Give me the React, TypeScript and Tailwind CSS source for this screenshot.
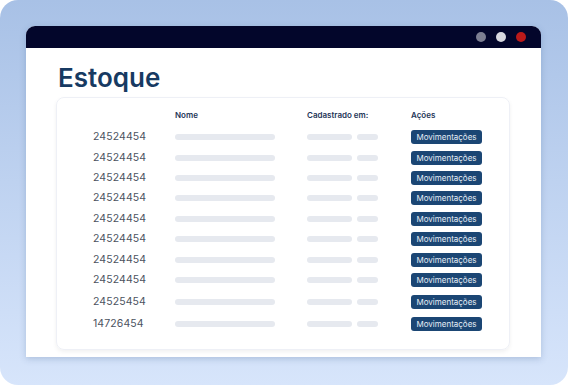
const rows = [
  { code: "24524454", h: "h-[20.4px]" },
  { code: "24524454", h: "h-[20.4px]" },
  { code: "24524454", h: "h-[20.4px]" },
  { code: "24524454", h: "h-[20.4px]" },
  { code: "24524454", h: "h-[20.4px]" },
  { code: "24524454", h: "h-[20.4px]" },
  { code: "24524454", h: "h-[20.4px]" },
  { code: "24524454", h: "h-[21px]" },
  { code: "24525454", h: "h-[22px]" },
  { code: "14726454", h: "h-[23px]" },
];

export default function App() {
  return (
    <div className="w-[568px] h-[385px] bg-white font-['Inter',sans-serif]">
      <div className="h-full rounded-[18px] bg-gradient-to-b from-[#a8c1e6] to-[#d7e5fb] pt-[26px] pl-[26px] pr-[27px]">
        <div className="h-[331px] bg-white rounded-t-[9px] shadow-[0_2px_6px_rgba(60,90,140,0.25)] overflow-hidden">
          <div className="h-[22px] bg-[#03062b] flex items-center justify-end gap-[10px] pr-[15px]">
            <span className="w-[10px] h-[10px] rounded-full bg-[#7d7f92]" />
            <span className="w-[10px] h-[10px] rounded-full bg-[#d8d9e0]" />
            <span className="w-[10px] h-[10px] rounded-full bg-[#bb1a1a]" />
          </div>
          <div className="px-[30px] pr-[31px]">
            <h1 className="text-[26px] leading-[26px] font-semibold text-[#173a62] pt-[17px] pb-[6px] pl-[2px]">
              Estoque
            </h1>
            <div className="h-[253px] rounded-[8px] border border-[#eef0f6] shadow-[0_2px_4px_rgba(0,0,0,0.06)] pt-[10px] pl-[36px]">
              <div className="grid grid-cols-[82px_132px_104px_1fr] h-[14px] items-center text-[8px] font-semibold text-[#1d3557]">
                <span />
                <span>Nome</span>
                <span>Cadastrado em:</span>
                <span>Ações</span>
              </div>
              <div className="pt-[5px]">
                {rows.map((r, i) => (
                  <div
                    key={i}
                    className={`grid grid-cols-[82px_132px_104px_1fr] items-center ${r.h}`}
                  >
                    <span className="text-[10.5px] leading-[12px] text-[#4b5260] tracking-[0.1px]">{r.code}</span>
                    <span className="w-[100px] h-[6px] rounded-full bg-[#e6e9ef]" />
                    <span className="flex gap-[5px]">
                      <span className="w-[45px] h-[6px] rounded-full bg-[#e6e9ef]" />
                      <span className="w-[21px] h-[6px] rounded-full bg-[#e6e9ef]" />
                    </span>
                    <span className="flex items-center">
                      <span className="flex items-center justify-center w-[71px] h-[14px] rounded-[3px] bg-[#1b4674] text-[8px] leading-[10px] text-[#e8eef7]">
                        Movimentações
                      </span>
                    </span>
                  </div>
                ))}
              </div>
            </div>
          </div>
        </div>
      </div>
    </div>
  );
}
